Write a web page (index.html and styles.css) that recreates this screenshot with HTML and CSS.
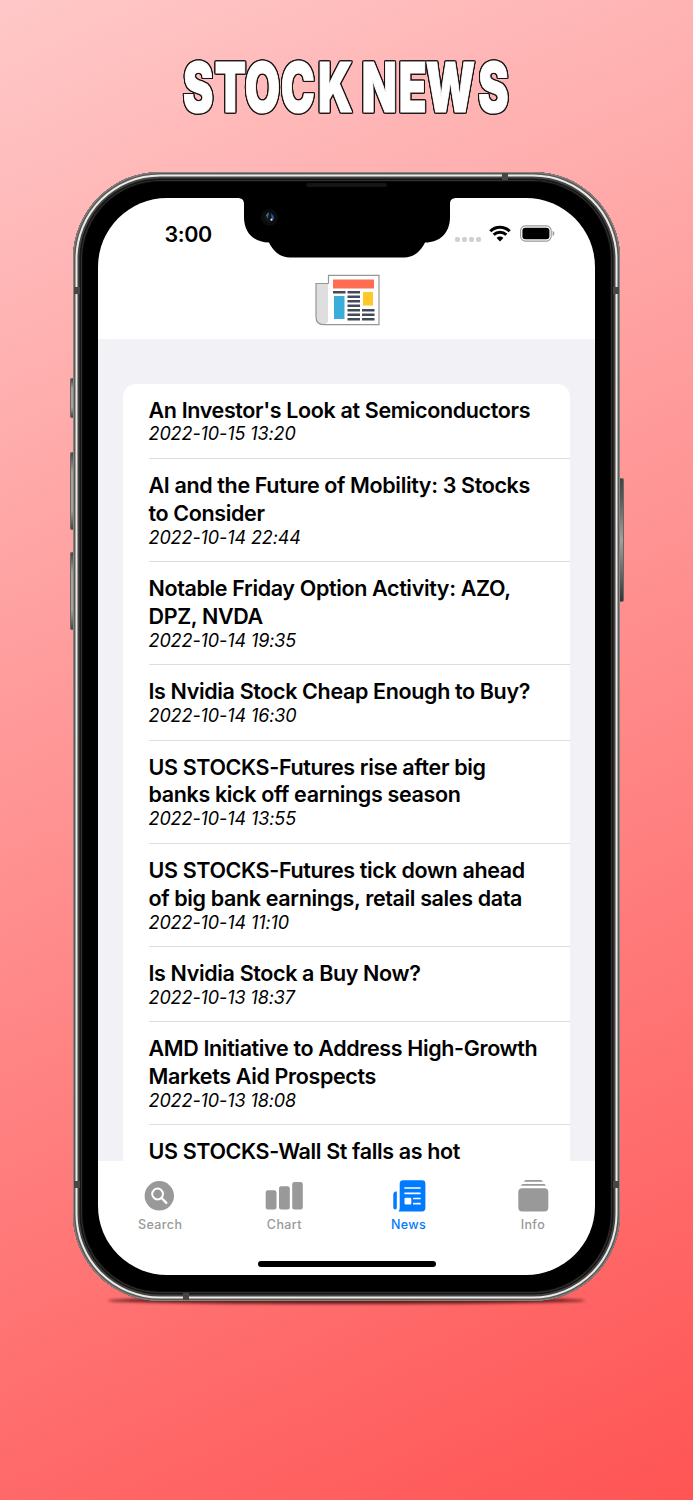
FILE: index.html
```html
<!DOCTYPE html>
<html lang="en">
<head>
  <meta charset="UTF-8">
  <meta name="viewport" content="width=device-width, initial-scale=1">
  <title>Stock News</title>
  <link rel="stylesheet" href="styles.css">
</head>
<body>

<h1 class="headline">
  <svg width="340" height="70" viewBox="0 0 340 70">
    <!-- squeezed horizontally, one x per letter -->
    <g transform="scale(0.66 1)">
      <text class="headline-text" y="58.5" x="32 81 129.5 183 240 272 306.5 357 414.4 479.5">STOCK NEWS</text>
    </g>
  </svg>
</h1>

<div class="phone">
  <!-- hardware buttons -->
  <span class="side mute"></span>
  <span class="side vol-up"></span>
  <span class="side vol-down"></span>
  <span class="side power"></span>
  <!-- antenna lines -->
  <span class="band band-top"></span>
  <span class="band band-bottom"></span>
  <span class="band band-left-top"></span>
  <span class="band band-left-bottom"></span>
  <span class="band band-right-top"></span>
  <span class="band band-right-bottom"></span>
  <span class="speaker"></span>

  <div class="screen">
    <svg class="notch" width="220" height="62" viewBox="0 0 220 62">
      <path d="M0 0H220V1C215 1 213 3 213 7V20C213 36 203 45.500 188 45.500C184 54 177 60.500 167 60.500H53C43 60.500 36 54 32 45.500C17 45.500 7 36 7 20V7C7 3 5 1 0 1Z"/>
      <circle cx="32.5" cy="20.5" r="8.5" fill="#0c0c0e"/>
      <circle cx="32.5" cy="20.5" r="5" fill="#12161c"/>
      <path d="M29 18.500q1-3 3-3-1 3-1 6z" fill="#3f7a66"/>
      <path d="M34 16.500q3 2 3 5l-2 1z" fill="#2a5fae"/>
      <circle cx="34.5" cy="22.7" r="1.1" fill="#dfe9ff"/>
    </svg>

    <header class="top">
      <div class="status">
        <span class="time">3:00</span>
        <div class="indicators">
          <span class="dots"><i></i><i></i><i></i><i></i></span>
          <svg width="22" height="17" viewBox="0 0 22 17">
            <g fill="none" stroke="#000" stroke-width="3">
              <path d="M1.3 6.2A13.7 13.7 0 0 1 20.7 6.2"/>
              <path d="M4.7 9.8A8.9 8.9 0 0 1 17.3 9.8"/>
            </g>
            <path d="M11 16.5L7.6 13A4.8 4.8 0 0 1 14.4 13Z"/>
          </svg>
          <svg class="battery" width="35" height="17" viewBox="0 0 35 17">
            <rect x=".6" y=".9" width="30.6" height="15.2" rx="4.8" fill="#fff" stroke="#999" stroke-width="1.1"/>
            <rect x="2.4" y="2.7" width="27" height="11.6" rx="3"/>
            <path d="M32.6 5.8q1.8.8 1.8 2.7t-1.8 2.7z" fill="#999"/>
          </svg>
        </div>
      </div>

      <!-- newspaper logo -->
      <svg class="logo" width="66" height="52" viewBox="0 0 66 52">
        <path d="M2 9.5H14V50.5H8Q2 50 2 43Z" fill="#dedede"/>
        <path d="M14.5 9V1.5H65V50.5H9Q14.5 50 14.5 44Z" fill="#fff"/>
        <path d="M14.5 9.5V1.3H65V50.7H9.5Q2 50.5 2 43V9.5H14.5" fill="none" stroke="#969696" stroke-width="1.2"/>
        <rect x="19" y="5.5" width="41" height="9" fill="#ff6e52"/>
        <rect x="20" y="22" width="10.5" height="23" fill="#3badd9"/>
        <rect x="49" y="18" width="10" height="13.5" fill="#ffc828"/>
        <g fill="#434a59">
          <rect x="19" y="17" width="12.5" height="2.5"/>
          <rect x="33.5" y="17" width="12.5" height="2.5"/>
          <rect x="33.5" y="21.5" width="12.5" height="2.5"/>
          <rect x="33.5" y="26" width="12.5" height="2.5"/>
          <rect x="33.5" y="30.5" width="12.5" height="2.5"/>
          <rect x="33.5" y="35" width="12.5" height="2.5"/>
          <rect x="33.5" y="39.5" width="12.5" height="2.5"/>
          <rect x="33.5" y="44" width="12.5" height="2.5"/>
          <rect x="48" y="35" width="12.5" height="2.5"/>
          <rect x="48" y="39.5" width="12.5" height="2.5"/>
          <rect x="48" y="44" width="12.5" height="2.5"/>
        </g>
      </svg>
    </header>

    <main class="feed">
      <ul class="card">
        <li>
          <h2>An Investor's Look at Semiconductors</h2>
          <time>2022-10-15 13:20</time>
        </li>
        <li>
          <h2>AI and the Future of Mobility: 3 Stocks<br>to Consider</h2>
          <time>2022-10-14 22:44</time>
        </li>
        <li>
          <h2>Notable Friday Option Activity: AZO,<br>DPZ, NVDA</h2>
          <time>2022-10-14 19:35</time>
        </li>
        <li>
          <h2>Is Nvidia Stock Cheap Enough to Buy?</h2>
          <time>2022-10-14 16:30</time>
        </li>
        <li>
          <h2>US STOCKS-Futures rise after big<br>banks kick off earnings season</h2>
          <time>2022-10-14 13:55</time>
        </li>
        <li>
          <h2>US STOCKS-Futures tick down ahead<br>of big bank earnings, retail sales data</h2>
          <time>2022-10-14 11:10</time>
        </li>
        <li>
          <h2>Is Nvidia Stock a Buy Now?</h2>
          <time>2022-10-13 18:37</time>
        </li>
        <li>
          <h2>AMD Initiative to Address High-Growth<br>Markets Aid Prospects</h2>
          <time>2022-10-13 18:08</time>
        </li>
        <li>
          <h2>US STOCKS-Wall St falls as hot</h2>
        </li>
      </ul>
    </main>

    <nav class="tabs">
      <a class="tab">
        <svg width="40" height="34" viewBox="0 0 40 34">
          <circle cx="19.3" cy="16.8" r="14.7" fill="currentColor"/>
          <circle cx="17.6" cy="15" r="5.4" fill="none" stroke="#fff" stroke-width="2"/>
          <path d="M21.6 19L26.3 23.8" stroke="#fff" stroke-width="2.4" stroke-linecap="round"/>
        </svg>
        <span>Search</span>
      </a>
      <a class="tab">
        <svg width="40" height="34" viewBox="0 0 40 34" fill="currentColor">
          <rect x="1.7" y="11.3" width="10.8" height="19.2" rx="2.2"/>
          <rect x="15" y="7.3" width="10.8" height="23.2" rx="2.2"/>
          <rect x="28.2" y="3" width="10.6" height="27.5" rx="2.2"/>
        </svg>
        <span>Chart</span>
      </a>
      <a class="tab active">
        <svg width="40" height="34" viewBox="0 0 40 34">
          <path d="M14.3 1.3H33Q36.4 1.3 36.4 4.7V29Q36.4 32.4 33 32.4H9.5Q10.7 31.5 10.7 29V4.7Q10.7 1.3 14.3 1.3Z" fill="currentColor"/>
          <path d="M7.8 12.3V28.5Q7.8 30.6 6.2 30.6Q4.3 30.6 4.3 28.5V15.5Q4.3 12.8 7.8 12.3Z" fill="currentColor"/>
          <path d="M16 9H31M16 14.3H31M24.8 19.5H31M24.8 24.7H31" stroke="#fff" stroke-width="1.7" stroke-linecap="round"/>
          <rect x="15.5" y="18.8" width="6.8" height="6.6" rx="1" fill="#fff"/>
        </svg>
        <span>News</span>
      </a>
      <a class="tab">
        <svg width="40" height="34" viewBox="0 0 40 34" fill="currentColor">
          <path d="M12.3 1H28.5L30 2.8H10.8Z"/>
          <path d="M9.3 5H31.5L33 6.8H7.8Z"/>
          <rect x="5.3" y="9.2" width="30" height="23.4" rx="4"/>
        </svg>
        <span>Info</span>
      </a>
    </nav>
    <div class="home-bar"></div>
  </div>
</div>

</body>
</html>
```

FILE: styles.css
```css
* {
  box-sizing: border-box;
}
body {
  margin: 0;
  width: 693px;
  height: 1500px;
  overflow: hidden;
  font-family: Inter, "Liberation Sans", sans-serif;
  background: linear-gradient(155deg, #ffc8c8 0%, #ff5454 100%);
}
.headline {
  margin: 0;
  height: 172px;
  padding-top: 53px;
}
.headline svg {
  display: block;
  margin: 0 auto;
  overflow: visible;
  filter: drop-shadow(1px 0 0 #1a1414) drop-shadow(-1px 0 0 #1a1414) drop-shadow(0 1px 0 #1a1414) drop-shadow(0 -1px 0 #1a1414);
}
.headline-text {
  font-family: Inter, sans-serif;
  font-weight: 900;
  font-size: 69px;
  text-anchor: middle;
  fill: #fff;
  stroke: #fff;
  stroke-width: 1.2px;
}

/* phone body: metal edge, then black bezel */
.phone {
  position: relative;
  width: 547px;
  height: 1129px;
  margin-left: 73px;
  padding: 26px 25px;
  border-radius: 87px;
  background: #000;
  box-shadow:
    inset 0 0 0 1px #858380,
    inset 0 0 0 2.5px #5c5a58,
    inset 0 0 0 4.5px #eceae6,
    inset 0 0 0 6.5px #454341,
    inset 0 0 0 8px #161616,
    inset 0 0 0 9px #303030,
    inset 0 0 0 10px #0b0b0b;
}
.phone::before {
  content: "";
  position: absolute;
  z-index: -1;
  left: 35px;
  right: 35px;
  bottom: -3px;
  height: 7px;
  border-radius: 50%;
  background: rgba(50, 0, 0, 0.75);
  filter: blur(1.5px);
}
.side {
  position: absolute;
  left: -3px;
  width: 3px;
  border: 1px solid #6e6663;
  border-width: 1px 0 1px 1px;
  border-radius: 2px 0 0 2px;
  background: linear-gradient(#444, #a5a19d 25%, #a5a19d 75%, #444);
}
.mute {
  top: 206px;
  height: 40px;
}
.vol-up {
  top: 280px;
  height: 78px;
}
.vol-down {
  top: 380px;
  height: 78px;
}
.power {
  left: auto;
  right: -4px;
  top: 306px;
  width: 4px;
  height: 124px;
  border-width: 1px 1px 1px 0;
  border-radius: 0 2px 2px 0;
  background: linear-gradient(#444, #555 15%, #a5a19d 50%, #555 85%, #333);
}
.band {
  position: absolute;
  width: 6px;
  height: 7px;
  background: #484644;
}
.band-top {
  left: 429px;
  top: 1px;
}
.band-bottom {
  left: 110px;
  bottom: 1px;
}
.band-left-top {
  left: 1px;
  top: 115px;
}
.band-left-bottom {
  left: 1px;
  top: 1009px;
}
.band-right-top {
  right: 1px;
  top: 115px;
}
.band-right-bottom {
  right: 1px;
  top: 1009px;
}
.speaker {
  position: absolute;
  left: 233px;
  top: 11px;
  width: 81px;
  height: 4px;
  border-radius: 2px;
  background: #151515;
}

.screen {
  position: relative;
  display: flex;
  flex-direction: column;
  height: 1077px;
  border-radius: 69px;
  overflow: hidden;
  background: #fff;
}
.notch {
  position: absolute;
  left: 138.5px;
  top: -1px;
}
.top {
  height: 141px;
}
.status {
  display: flex;
  justify-content: space-between;
  align-items: center;
  height: 71px;
  padding: 0 40.5px 0 66.5px;
}
.time {
  font-size: 21.5px;
  font-weight: 600;
  letter-spacing: -0.4px;
}
.indicators {
  display: flex;
  align-items: center;
}
.dots {
  display: flex;
  gap: 2px;
  margin: 11px 8px 0 0;
}
.dots i {
  width: 5px;
  height: 5px;
  border-radius: 2px;
  background: #d0d0d0;
}
.battery {
  margin-left: 9px;
}
.logo {
  display: block;
  margin: 4.5px 0 0 216px;
}

.feed {
  height: 822px;
  padding: 44.5px 25px 0;
  overflow: hidden;
  background: #f2f1f6;
}
.card {
  margin: 0;
  padding: 0 0 0 25.5px;
  list-style: none;
  border-radius: 13px 13px 0 0;
  background: #fff;
}
.card li {
  padding: 13px 0 14.4px;
  border-bottom: 1px solid #dddddf;
  white-space: nowrap;
}
.card h2 {
  margin: 0;
  font-size: 21.5px;
  font-weight: 600;
  line-height: 27.9px;
  letter-spacing: -0.36px;
}
.card time {
  display: block;
  font-size: 18px;
  font-style: italic;
  line-height: 19px;
  letter-spacing: -0.1px;
}

.tabs {
  display: flex;
  padding-top: 18px;
  color: #999;
}
.tab {
  flex: 1;
  display: flex;
  flex-direction: column;
  align-items: center;
  gap: 4px;
  font-size: 12.5px;
  font-weight: 500;
  line-height: 16px;
  letter-spacing: 0.4px;
}
.active {
  color: #007aff;
}
.home-bar {
  width: 178px;
  height: 6px;
  margin: 28px auto 0;
  border-radius: 3px;
  background: #000;
}
```
